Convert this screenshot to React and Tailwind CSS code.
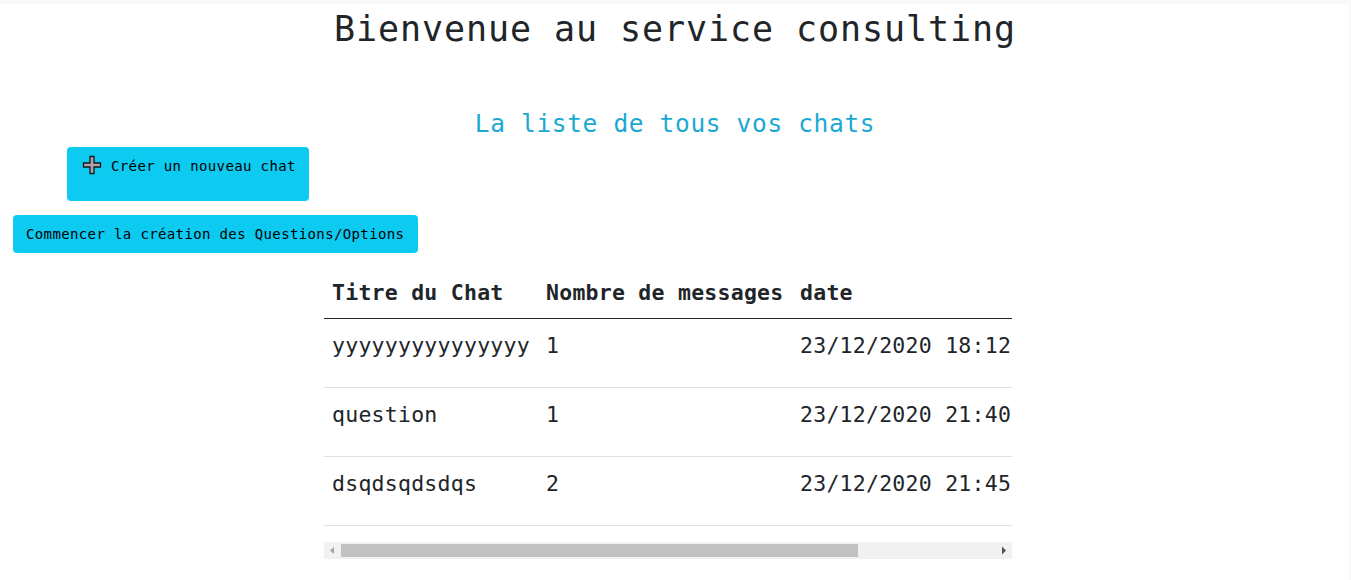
const chats = [
  { title: 'yyyyyyyyyyyyyyy', count: 1, date: '23/12/2020 18:12' },
  { title: 'question', count: 1, date: '23/12/2020 21:40' },
  { title: 'dsqdsqdsdqs', count: 2, date: '23/12/2020 21:45' },
];

function PlusIcon() {
  return (
    <svg className="mt-2 h-5 w-5 shrink-0" viewBox="0 0 20 20">
      <path d="M8 1.5h4v6.5h6.5v4h-6.5v6.5h-4v-6.5h-6.5v-4h6.5z" fill="#b3a5a5" stroke="#101820" strokeWidth="1.3" />
    </svg>
  );
}

function ScrollBar() {
  return (
    <div className="mt-4 flex h-[17px] w-full items-center bg-[#f1f1f1]">
      <svg className="h-[17px] w-[17px] shrink-0" viewBox="0 0 17 17">
        <path d="M10 5v7L6 8.5z" fill="#a3a3a3" />
      </svg>
      <div className="h-[13px] w-[517px] bg-[#c1c1c1]" />
      <svg className="ml-auto h-[17px] w-[17px] shrink-0" viewBox="0 0 17 17">
        <path d="M7 4.5v8l4-4z" fill="#505050" />
      </svg>
    </div>
  );
}

export default function App() {
  return (
    <div className="flex h-[580px] w-full flex-col overflow-hidden border-t-4 border-r-2 border-t-[#f8f9fa] border-r-[#f8f8f8] bg-white font-['DejaVu_Sans_Mono',monospace] text-[#212529]">
      <h1 className="h-12 pl-px text-center text-[35px] leading-[50px] tracking-[0.93px] whitespace-nowrap">
        Bienvenue au service consulting
      </h1>
      <h2 className="mt-[54px] h-[34px] pl-px text-center text-[24.5px] leading-9 tracking-[0.65px] whitespace-nowrap text-[#1ba8d2]">
        La liste de tous vos chats
      </h2>
      <button className="mt-[7px] ml-[67px] flex h-[54px] w-[242px] shrink-0 rounded bg-[#0dcaf0] pl-[15px] text-[14px] tracking-[0.37px] whitespace-nowrap text-black">
        <PlusIcon />
        <span className="ml-[9px] pt-[7px] leading-6">Créer un nouveau chat</span>
      </button>
      <button className="mt-[14px] ml-[13px] h-[38px] w-[405px] shrink-0 rounded bg-[#0dcaf0] pl-[13px] text-left text-[14px] leading-[38px] tracking-[0.37px] whitespace-nowrap text-black">
        Commencer la création des Questions/Options
      </button>
      <div className="mt-[13px] ml-[324px] w-[688px] shrink-0 overflow-hidden">
        <table className="w-[688px] table-fixed border-collapse text-left text-[21.5px] leading-9 tracking-[0.25px] whitespace-nowrap">
          <colgroup>
            <col className="w-[214px]" />
            <col className="w-[254px]" />
            <col className="w-[220px]" />
          </colgroup>
          <thead>
            <tr className="h-[52px] border-b border-[#212529] align-top">
              <th className="pt-[9px] pl-2">Titre du Chat</th>
              <th className="pt-[9px] pl-2">Nombre de messages</th>
              <th className="pt-[9px] pl-2">date</th>
            </tr>
          </thead>
          <tbody>
            {chats.map((chat) => (
              <tr key={chat.title} className="h-[69px] border-b border-[#dee2e6] align-top">
                <td className="pt-[9px] pl-2">{chat.title}</td>
                <td className="pt-[9px] pl-2">{chat.count}</td>
                <td className="pt-[9px] pl-2">{chat.date}</td>
              </tr>
            ))}
          </tbody>
        </table>
        <ScrollBar />
      </div>
    </div>
  );
}
